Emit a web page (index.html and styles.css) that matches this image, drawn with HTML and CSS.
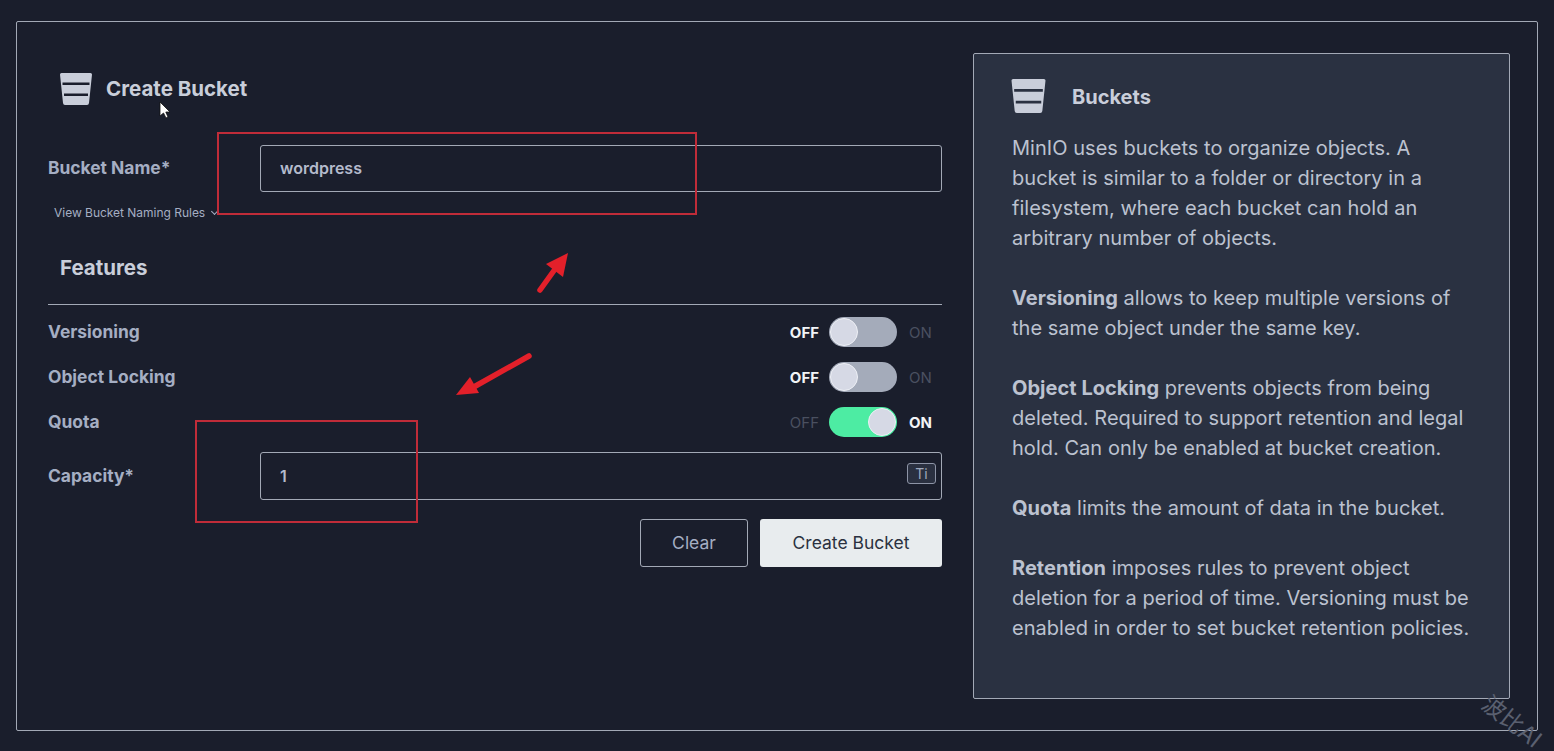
FILE: index.html
```html
<!DOCTYPE html>
<html lang="en">
<head>
    <meta charset="UTF-8">
    <meta name="viewport" content="width=device-width, initial-scale=1.0">
    <title>Create Bucket</title>
    <link rel="stylesheet" href="styles.css">
</head>
<body>
    <div class="container">
        <form class="form-col">
            <div class="form-title">
                <svg class="bucket-icon" viewBox="0 0 32 32"><path fill-rule="evenodd" d="M1.5 0H30.5Q32 0 32 1.5L29 30Q28.8 32 27 32H5Q3.2 32 3 30L0 1.5Q0 0 1.5 0ZM2.5 9.5V12H29.5V9.5ZM4 20.5V23H28V20.5Z"/></svg>
                <h1>Create Bucket</h1>
            </div>

            <div class="form-group name-group">
                <label for="bucketName">Bucket Name*</label>
                <input type="text" id="bucketName" value="wordpress">
            </div>
            <div class="rules">View Bucket Naming Rules <span class="chevron"></span></div>

            <h2>Features</h2>

            <div class="switch-row row-first">
                <span class="switch-label">Versioning</span>
                <span class="state on-text">OFF</span>
                <span class="switch"><span class="knob"></span></span>
                <span class="state">ON</span>
            </div>
            <div class="switch-row">
                <span class="switch-label">Object Locking</span>
                <span class="state on-text">OFF</span>
                <span class="switch"><span class="knob"></span></span>
                <span class="state">ON</span>
            </div>
            <div class="switch-row">
                <span class="switch-label">Quota</span>
                <span class="state">OFF</span>
                <span class="switch active"><span class="knob"></span></span>
                <span class="state on-text">ON</span>
            </div>

            <div class="form-group capacity-group">
                <label for="capacity">Capacity*</label>
                <div class="input-wrap">
                    <input type="text" id="capacity" value="1">
                    <span class="unit">Ti</span>
                </div>
            </div>

            <div class="buttons">
                <button type="button" class="btn-clear">Clear</button>
                <button type="button" class="btn-create">Create Bucket</button>
            </div>
        </form>

        <aside class="help">
            <div class="help-title">
                <svg class="bucket-icon" viewBox="0 0 32 32"><path fill-rule="evenodd" d="M1.5 0H30.5Q32 0 32 1.5L29 30Q28.8 32 27 32H5Q3.2 32 3 30L0 1.5Q0 0 1.5 0ZM2.5 9.5V12H29.5V9.5ZM4 20.5V23H28V20.5Z"/></svg>
                <h3>Buckets</h3>
            </div>
            <p>MinIO uses buckets to organize objects. A bucket is similar to a folder or directory in a filesystem, where each bucket can hold an arbitrary number of objects.</p>
            <p><b>Versioning</b> allows to keep multiple versions of the same object under the same key.</p>
            <p><b>Object Locking</b> prevents objects from being deleted. Required to support retention and legal hold. Can only be enabled at bucket creation.</p>
            <p><b>Quota</b> limits the amount of data in the bucket.</p>
            <p><b>Retention</b> imposes rules to prevent object deletion for a period of time. Versioning must be enabled in order to set bucket retention policies.</p>
        </aside>
    </div>

    <!-- annotations drawn over the screenshot -->
    <div class="mark mark-name"></div>
    <div class="mark mark-capacity"></div>
    <svg class="arrows" viewBox="0 0 1554 751">
        <path class="shaft" d="M540 290L558 265"/>
        <path class="head" d="M568 253L563 277L546 264Z"/>
        <path class="shaft" d="M529 356L472 388"/>
        <path class="head" d="M456 395L470 377L479 393Z"/>
    </svg>
    <svg class="cursor" viewBox="0 0 12 18"><path d="M1 1V15L4.5 12L7 17L9 16L6.8 11H11Z"/></svg>
    <span class="watermark">波比AI</span>
</body>
</html>
```

FILE: styles.css
```css
* {
    box-sizing: border-box;
}

body {
    font-family: Inter, "Noto Sans CJK SC", sans-serif;
    margin: 0;
    padding: 21px 16px;
    background-color: #1a1e2c;
    height: 751px;
    overflow: hidden;
    color: #c5cad8;
}

.container {
    display: grid;
    grid-template-columns: 894px 537px;
    column-gap: 31px;
    align-items: start;
    height: 710px;
    padding: 31px;
    border: 1px solid #a3a9b6;
    border-radius: 2px;
}

.bucket-icon {
    display: block;
    fill: #c9ceda;
}

.form-title {
    display: flex;
    align-items: center;
    height: 32px;
    margin: 20px 0 0 12px;
}

.form-title .bucket-icon {
    width: 32px;
    height: 32px;
    margin-right: 14px;
}

h1 {
    margin: 0 0 2px;
    font-size: 20.5px;
    font-weight: 700;
    color: #c9ceda;
}

.form-group {
    display: flex;
    align-items: center;
}

.form-group label {
    width: 212px;
    flex: none;
    padding-bottom: 2px;
    font-size: 17.4px;
    font-weight: 700;
    color: #a5aec3;
}

input {
    width: 100%;
    height: 47px;
    padding: 0 19px 2px;
    border: 1px solid #a3a9b6;
    border-radius: 3px;
    background: transparent;
    color: #b4bbcc;
    font-family: inherit;
    font-size: 16px;
    font-weight: 600;
}

.name-group {
    margin-top: 40px;
}

.rules {
    margin: 13px 0 0 6px;
    font-size: 12px;
    line-height: 15px;
    letter-spacing: -0.02px;
    color: #a5aec3;
}

.chevron {
    display: inline-block;
    width: 5px;
    height: 5px;
    margin: 0 0 3px 3px;
    border-right: 1px solid #a5aec3;
    border-bottom: 1px solid #a5aec3;
    transform: rotate(45deg);
}

h2 {
    margin: 0;
    height: 85px;
    padding: 35px 0 0 12px;
    border-bottom: 1px solid #a3a9b6;
    font-size: 20.5px;
    line-height: 25px;
    font-weight: 700;
    color: #c9ceda;
}

.switch-row {
    display: flex;
    align-items: center;
    height: 30px;
    margin-top: 15px;
}

.row-first {
    margin-top: 12px;
}

.switch-label {
    margin-right: auto;
    padding-bottom: 2px;
    font-size: 17.4px;
    font-weight: 700;
    color: #a5aec3;
}

.state {
    width: 32px;
    font-size: 15px;
    font-weight: 400;
    color: #4a5060;
}

.state.on-text {
    font-weight: 700;
    color: #f2f4f7;
}

.switch-row .state:nth-child(2) {
    text-align: right;
    margin-right: 10px;
}

.switch-row .state:last-child {
    margin-left: 12px;
    width: 33px;
}

.switch {
    display: flex;
    align-items: center;
    width: 68px;
    height: 30px;
    padding: 1px;
    border-radius: 15px;
    background-color: #a4abba;
}

.switch.active {
    justify-content: flex-end;
    background-color: #4deca3;
}

.knob {
    width: 28px;
    height: 28px;
    border: 1px solid #eef0f6;
    border-radius: 50%;
    background-color: #d6d9e5;
}

.capacity-group {
    margin-top: 15px;
}

.input-wrap {
    position: relative;
    flex: 1;
}

.input-wrap input {
    height: 48px;
    padding: 0 19px;
}

.unit {
    position: absolute;
    top: 11px;
    right: 6px;
    width: 29px;
    height: 21px;
    border: 1px solid #8d94a6;
    border-radius: 3px;
    background-color: #2a3040;
    color: #9fa8bd;
    font-size: 14px;
    line-height: 19px;
    text-align: center;
}

.buttons {
    display: flex;
    justify-content: flex-end;
    gap: 12px;
    margin-top: 19px;
}

button {
    height: 48px;
    padding-bottom: 2px;
    border-radius: 3px;
    font-family: inherit;
    font-size: 17.5px;
    cursor: pointer;
}

.btn-clear {
    width: 108px;
    border: 1px solid #a3a9b6;
    background: transparent;
    color: #a5aec3;
}

.btn-create {
    width: 182px;
    border: none;
    background-color: #e8ecee;
    color: #2b3140;
}

.help {
    height: 646px;
    padding: 25px 38px 0;
    border: 1px solid #a3a9b6;
    border-radius: 2px;
    background-color: #2a3141;
}

.help-title {
    display: flex;
    align-items: center;
    height: 34px;
    margin-bottom: 20px;
}

.help-title .bucket-icon {
    width: 35px;
    height: 34px;
    margin: 0 26px 0 -1px;
}

h3 {
    margin: 2px 0 0;
    font-size: 20px;
    font-weight: 700;
    color: #c9ceda;
}

.help p {
    margin: 0 0 30px;
    font-size: 20px;
    line-height: 30px;
    letter-spacing: 0.03px;
    color: #bcc2d0;
}

.help b {
    font-weight: 700;
}

.mark {
    position: absolute;
    border: 2px solid #c02c39;
}

.mark-name {
    left: 217px;
    top: 132px;
    width: 480px;
    height: 83px;
}

.mark-capacity {
    left: 195px;
    top: 420px;
    width: 223px;
    height: 103px;
}

.arrows {
    position: absolute;
    left: 0;
    top: 0;
    width: 1554px;
    height: 751px;
    pointer-events: none;
}

.shaft {
    fill: none;
    stroke: #e3202a;
    stroke-width: 5.5;
    stroke-linecap: round;
}

.head {
    fill: #e3202a;
}

.cursor {
    position: absolute;
    left: 159px;
    top: 101px;
    width: 12px;
    height: 18px;
    fill: #fff;
    stroke: #111;
    stroke-width: 0.8;
}

.watermark {
    position: absolute;
    left: 1479px;
    top: 703px;
    font-size: 23px;
    color: #5a6070;
    transform: rotate(38deg);
}
```
